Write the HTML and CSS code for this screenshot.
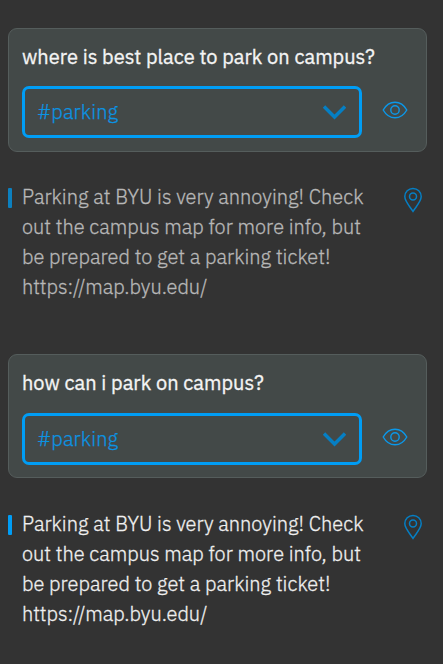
FILE: index.html
```
<!DOCTYPE html>
<html lang="en">
<head>
<meta charset="utf-8">
<title>Campus questions</title>
<link rel="stylesheet" href="styles.css">
</head>
<body>
<svg class="defs" aria-hidden="true">
  <symbol id="chevron" viewBox="0 0 24 16"><path d="M2 2.500 12.500 13 23 2.500" stroke-width="3.400"/></symbol>
  <symbol id="eye" viewBox="0 0 26 18"><path d="M1.200 9C4 4 8 1.200 13 1.200S22 4 24.800 9c-2.800 5-6.800 7.800-11.800 7.800S4 14 1.200 9Z" stroke-width="1.400"/><circle cx="13" cy="9" r="4.200" stroke-width="1.400"/></symbol>
  <symbol id="pin" viewBox="0 0 20 26"><path d="M10 24.400C7.500 20.200 1.800 14.700 1.800 9.600a8.200 8.200 0 0 1 16.400 0c0 5.100-5.700 10.600-8.200 14.800Z" stroke-width="1.500"/><circle cx="10" cy="9.600" r="3.500" stroke-width="1.500"/></symbol>
</svg>
<main class="thread">
  <section class="entry">
    <div class="card">
      <h2 class="question">where is best place to park on campus?</h2>
      <div class="controls">
        <div class="select"><span class="tag">#parking</span><svg class="chevron"><use href="#chevron"/></svg></div>
        <svg class="eye"><use href="#eye"/></svg>
      </div>
    </div>
    <div class="answer muted">
      <i class="bar"></i>
      <p class="copy">Parking at BYU is very annoying! Check<br>out the campus map for more info, but<br>be prepared to get a parking ticket!<br>https://map.byu.edu/</p>
      <svg class="pin"><use href="#pin"/></svg>
    </div>
  </section>
  <section class="entry second">
    <div class="card">
      <h2 class="question">how can i park on campus?</h2>
      <div class="controls">
        <div class="select"><span class="tag">#parking</span><svg class="chevron"><use href="#chevron"/></svg></div>
        <svg class="eye"><use href="#eye"/></svg>
      </div>
    </div>
    <div class="answer">
      <i class="bar"></i>
      <p class="copy">Parking at BYU is very annoying! Check<br>out the campus map for more info, but<br>be prepared to get a parking ticket!<br>https://map.byu.edu/</p>
      <svg class="pin"><use href="#pin"/></svg>
    </div>
  </section>
</main>
</body>
</html>
```
FILE: styles.css
```
* { box-sizing: border-box; }
body {
  margin: 0;
  height: 664px;
  overflow: hidden;
  background: #333;
  color: #f4f4f4;
  font: 300 20px/30px "IBM Plex Sans", Roboto, sans-serif;
}
svg { fill: none; stroke: currentColor; flex: none; }
.defs { position: absolute; width: 0; height: 0; }
.thread { padding: 28px 16px 0 8px; }
.entry { height: 326px; }
.card {
  height: 124px;
  padding: 13px;
  border: 1px solid #555d5c;
  border-radius: 9px;
  background: #434948;
}
.question {
  margin: 0;
  font-size: 20px;
  font-weight: 400;
  line-height: 30px;
  white-space: nowrap;
  -webkit-text-stroke: 0.3px currentColor;
}
.controls { display: flex; align-items: center; gap: 20px; margin-top: 14px; }
.second .controls { margin-top: 15px; }
.select {
  display: flex;
  align-items: center;
  justify-content: space-between;
  width: 340px;
  height: 52px;
  padding: 0 13px 0 12px;
  border: 3px solid #009df5;
  border-radius: 7px;
  color: #0a94e4;
}
.tag { letter-spacing: 0.1px; -webkit-text-stroke: 0.25px currentColor; }
.chevron { width: 24px; height: 16px; color: #057fc4; }
.eye { width: 26px; height: 18px; margin-top: -4px; color: #0b98ea; }
.answer { display: flex; align-items: flex-start; margin-top: 30px; }
.second .answer { margin-top: 31px; }
.bar { width: 4px; height: 20px; margin: 6px 10px 0 0; border-radius: 1px; background: #009df5; }
.copy {
  width: 372px;
  margin: 0;
  white-space: nowrap;
  color: #f0f0f0;
  -webkit-text-stroke: 0.3px currentColor;
}
.pin { width: 20px; height: 26px; margin: 5px 0 0 9px; color: #057fc4; }
.muted .bar { background: #0c80bf; }
.muted .copy { color: #b8b8b8; }
```
